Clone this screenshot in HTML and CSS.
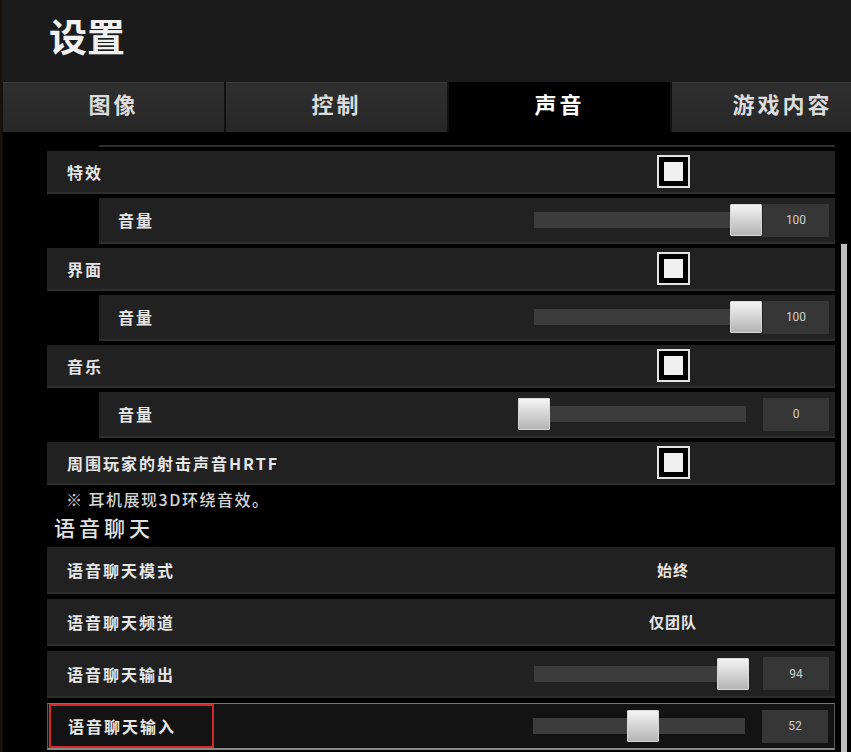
FILE: index.html
```html
<!DOCTYPE html>
<html lang="zh">
<head>
  <meta charset="UTF-8">
  <meta name="viewport" content="width=device-width, initial-scale=1.0">
  <title>设置</title>
  <link rel="stylesheet" href="styles.css">
</head>
<body>

  <div class="header">
    <h1 class="title">设置</h1>
  </div>

  <!-- Tabs -->
  <div class="tabs">
    <div class="tab">图像</div>
    <div class="tab">控制</div>
    <div class="tab active">声音</div>
    <div class="tab">游戏内容</div>
  </div>

  <div class="content">
    <div class="viewport">
      <div class="list">
        <!-- bottom edge of a row scrolled out of view -->
        <div class="row-edge"></div>

        <div class="row">
          <span class="label">特效</span>
          <div class="ctrl"><span class="checkbox"><span class="check-fill"></span></span></div>
        </div>
        <div class="row sub">
          <span class="label">音量</span>
          <div class="slider">
            <div class="track"><div class="thumb" style="left: 100%"></div></div>
            <div class="value-box">100</div>
          </div>
        </div>

        <div class="row">
          <span class="label">界面</span>
          <div class="ctrl"><span class="checkbox"><span class="check-fill"></span></span></div>
        </div>
        <div class="row sub">
          <span class="label">音量</span>
          <div class="slider">
            <div class="track"><div class="thumb" style="left: 100%"></div></div>
            <div class="value-box">100</div>
          </div>
        </div>

        <div class="row">
          <span class="label">音乐</span>
          <div class="ctrl"><span class="checkbox"><span class="check-fill"></span></span></div>
        </div>
        <div class="row sub">
          <span class="label">音量</span>
          <div class="slider">
            <div class="track"><div class="thumb" style="left: 0%"></div></div>
            <div class="value-box">0</div>
          </div>
        </div>

        <div class="row">
          <span class="label">周围玩家的射击声音HRTF</span>
          <div class="ctrl"><span class="checkbox"><span class="check-fill"></span></span></div>
        </div>
      </div>

      <p class="note">※ 耳机展现3D环绕音效。</p>
      <h2 class="section-title">语音聊天</h2>

      <div class="list voice">
        <div class="row tall">
          <span class="label">语音聊天模式</span>
          <div class="ctrl"><span class="option">始终</span></div>
        </div>
        <div class="row tall">
          <span class="label">语音聊天频道</span>
          <div class="ctrl"><span class="option">仅团队</span></div>
        </div>
        <div class="row tall">
          <span class="label">语音聊天输出</span>
          <div class="slider">
            <div class="track"><div class="thumb" style="left: 94%"></div></div>
            <div class="value-box">94</div>
          </div>
        </div>
        <div class="row tall selected">
          <span class="label marked">语音聊天输入</span>
          <div class="slider">
            <div class="track"><div class="thumb" style="left: 52%"></div></div>
            <div class="value-box">52</div>
          </div>
        </div>
      </div>
    </div>

    <div class="scrollbar"></div>
  </div>

</body>
</html>
```

FILE: styles.css
```css
body {
  margin: 0;
  background: #000;
  color: #e8e8e8;
  font-family: "Noto Sans CJK SC", "Noto Sans", sans-serif;
  width: 851px;
  height: 752px;
  overflow: hidden;
  border-left: 2px solid #17120e;
  box-sizing: border-box;
}

/* Header */
.header {
  height: 82px;
  background: #1b1b1b;
  padding-top: 15px;
  box-sizing: border-box;
}

.title {
  margin: 0 0 0 47px;
  font-size: 38px;
  font-weight: 700;
  color: #f0f0f0;
  line-height: 40px;
}

/* Tabs */
.tabs {
  display: flex;
  gap: 2px;
  height: 50px;
  padding-left: 1px;
  background: #111;
  overflow: hidden;
}

.tab {
  flex: 0 0 221px;
  display: flex;
  align-items: center;
  justify-content: center;
  background: linear-gradient(#2f2f2f, #272727);
  border-top: 1px solid #3a3a3a;
  box-sizing: border-box;
  font-size: 22px;
  line-height: 24px;
  font-weight: 700;
  letter-spacing: 3px;
  padding-bottom: 9px;
  color: #dcdcdc;
}

.tab.active {
  background: #000;
  border-top-color: #000;
  color: #fff;
}

/* Content */
.content {
  position: relative;
  height: 620px;
  padding: 13px 16px 0 44px;
  box-sizing: border-box;
  border-left: 1px solid #0c0c0c;
}

.viewport {
  height: 607px;
  overflow: hidden;
}

.list {
  display: flex;
  flex-direction: column;
  gap: 4px;
}

.row-edge {
  height: 2px;
  margin-left: 52px;
  background: #2e2e2e;
}

.row {
  display: flex;
  align-items: center;
  height: 43px;
  background: #212121;
  border-bottom: 2px solid #2e2e2e;
  box-sizing: border-box;
}

.row.sub {
  height: 46px;
  margin-left: 52px;
}

.row.tall {
  height: 47px;
}

.label {
  padding-left: 20px;
  font-size: 16px;
  font-weight: 700;
  letter-spacing: 2px;
  color: #e6e6e6;
}

.row.sub .label {
  padding-left: 19px;
}

/* Checkbox / option column */
.ctrl {
  margin-left: auto;
  margin-right: 102px;
  width: 120px;
  display: flex;
  justify-content: center;
}

.checkbox {
  width: 33px;
  height: 33px;
  border: 2px solid #e4e4e4;
  padding: 5px;
  background: #000;
  box-sizing: border-box;
  display: flex;
}

.check-fill {
  flex: 1;
  background: #f0f0f0;
}

.option {
  font-size: 15px;
  font-weight: 700;
  letter-spacing: 1px;
  color: #e6e6e6;
}

/* Slider */
.slider {
  margin-left: auto;
  margin-right: 6px;
  display: flex;
  align-items: center;
}

.track {
  position: relative;
  width: 212px;
  height: 16px;
  background: #3c3c3c;
}

.thumb {
  position: absolute;
  top: -8px;
  width: 32px;
  height: 32px;
  margin-left: -16px;
  background: linear-gradient(#f4f4f4, #b4b4b4);
  border: 1px solid #d8d8d8;
  border-radius: 1px;
  box-sizing: border-box;
}

.value-box {
  width: 66px;
  height: 33px;
  margin-left: 17px;
  background: #363636;
  display: flex;
  align-items: center;
  justify-content: center;
  font-family: "Liberation Sans Narrow", "Roboto", sans-serif;
  font-size: 12px;
  color: #d0d0d0;
}

/* Voice chat section */
.note {
  margin: 4px 0 0 19px;
  line-height: 20px;
  font-size: 16px;
  font-weight: 500;
  letter-spacing: 1.5px;
  color: #d4d4d4;
}

.section-title {
  margin: 5px 0 7px 7px;
  line-height: 26px;
  font-size: 21px;
  font-weight: 500;
  letter-spacing: 4px;
  color: #e0e0e0;
}

.list.voice {
  gap: 5px;
}

.row.selected {
  background: #131313;
  border: 1px solid #5c5c5c;
  border-top-color: #777;
  border-bottom: 2px solid #888;
}

.label.marked {
  align-self: stretch;
  display: flex;
  align-items: center;
  width: 165px;
  margin-left: 1px;
  padding-left: 17px;
  border: 2px solid #d02a2a;
  box-sizing: border-box;
}

/* Scroll indicator */
.scrollbar {
  position: absolute;
  top: 112px;
  right: 4px;
  bottom: 0;
  width: 6px;
  background: #bdbdbd;
}
```
